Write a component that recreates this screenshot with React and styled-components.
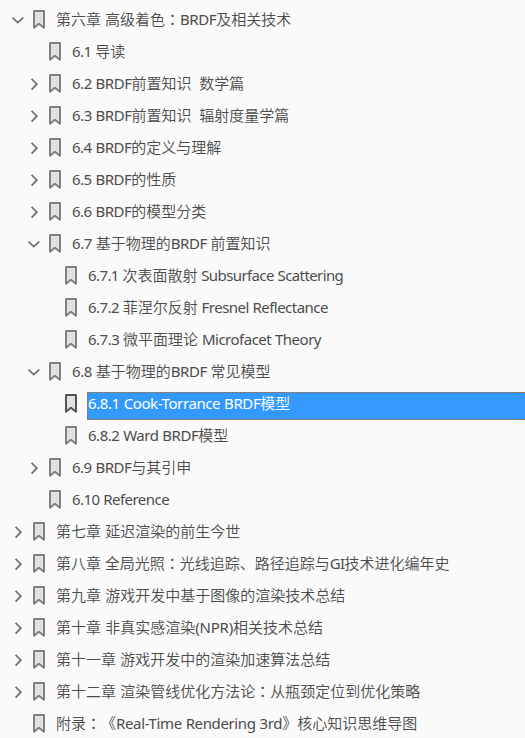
import React from "react";
import styled, { createGlobalStyle } from "styled-components";

const GlobalStyle = createGlobalStyle`
  html, body { margin: 0; background: #fafafa; overflow: hidden; }
`;

const Tree = styled.ul`
  box-sizing: border-box;
  height: 738px;
  margin: 0;
  padding: 4px 0 0;
  overflow: hidden;
  list-style: none;
  background: #fafafa;
  color: #4c4c4c;
  font-family: "Noto Sans", "Noto Sans CJK SC", sans-serif;
  font-size: 15px;
  text-spacing-trim: space-all;
`;

const Row = styled.li`
  display: flex;
  align-items: stretch;
  height: 32px;
  padding-left: ${(p) => 10 + p.$level * 16}px;
`;

const Toggle = styled.span`
  flex: none;
  width: 16px;
  height: 32px;
  svg { display: block; }
`;

const Mark = styled.span`
  flex: none;
  width: 29px;
  height: 32px;
  color: ${(p) => (p.$active ? "#555" : "#808080")};
  svg { display: block; }
`;

const Label = styled.span`
  box-sizing: border-box;
  flex: 1;
  height: 28px;
  margin-top: 4px;
  border: 1px dotted transparent;
  border-right: 0;
  line-height: 20px;
  white-space: pre;
  ${(p) =>
    p.$active &&
    `
    color: #fff;
    background: #3399ff;
    border-color: #cc6600;
  `}
`;

const Latin = styled.span`
  letter-spacing: ${(p) => p.$tracking}px;
  word-spacing: 0.4px;
`;

const Han = styled.span`
  font-family: "Noto Sans CJK SC", sans-serif;
  font-weight: 350;
`;

const Colon = styled.span`
  font-family: "Noto Sans CJK TC", sans-serif;
`;

function Chevron({ open }) {
  return (
    <svg width="16" height="32" viewBox="0 0 16 32" fill="none" stroke="#6e6e6e" strokeWidth="1.7">
      <path d={open ? "M2.4 13.7L7.8 18.7L13.2 13.7" : "M5.6 10.8L10.8 16.2L5.6 21.6"} />
    </svg>
  );
}

function Bookmark() {
  return (
    <svg width="20" height="32" viewBox="0 0 20 32">
      <path
        d="M8 7H18V23.8L13 19.8L8 23.8Z"
        fill="#e1e1e1"
        stroke="currentColor"
        strokeWidth="2"
        strokeLinejoin="round"
      />
    </svg>
  );
}

function MixedText({ text, tracking }) {
  return text.match(/[\x00-\x7f]+|：|[^\x00-\x7f：]+/g).map((run, i) => {
    if (run === "：") return <Colon key={i}>{run}</Colon>;
    if (run.charCodeAt(0) < 128) return <Latin key={i} $tracking={tracking}>{run}</Latin>;
    return <Han key={i}>{run}</Han>;
  });
}

const items = [
  [0, "open", "第六章 高级着色：BRDF及相关技术", -0.4],
  [1, "", "6.1 导读", -0.55],
  [1, "closed", "6.2 BRDF前置知识  数学篇", -0.48],
  [1, "closed", "6.3 BRDF前置知识  辐射度量学篇", -0.48],
  [1, "closed", "6.4 BRDF的定义与理解", -0.5],
  [1, "closed", "6.5 BRDF的性质", -0.5],
  [1, "closed", "6.6 BRDF的模型分类", -0.5],
  [1, "open", "6.7 基于物理的BRDF 前置知识", -0.45],
  [2, "", "6.7.1 次表面散射 Subsurface Scattering", -0.6],
  [2, "", "6.7.2 菲涅尔反射 Fresnel Reflectance", -0.54],
  [2, "", "6.7.3 微平面理论 Microfacet Theory", -0.5],
  [1, "open", "6.8 基于物理的BRDF 常见模型", -0.45],
  [2, "", "6.8.1 Cook-Torrance BRDF模型", -0.4, true],
  [2, "", "6.8.2 Ward BRDF模型", -0.48],
  [1, "closed", "6.9 BRDF与其引申", -0.5],
  [1, "", "6.10 Reference", -0.55],
  [0, "closed", "第七章 延迟渲染的前生今世", 0],
  [0, "closed", "第八章 全局光照：光线追踪、路径追踪与GI技术进化编年史", -0.6],
  [0, "closed", "第九章 游戏开发中基于图像的渲染技术总结", 0],
  [0, "closed", "第十章 非真实感渲染(NPR)相关技术总结", -0.2],
  [0, "closed", "第十一章 游戏开发中的渲染加速算法总结", 0],
  [0, "closed", "第十二章 渲染管线优化方法论：从瓶颈定位到优化策略", 0],
  [0, "", "附录：《Real-Time Rendering 3rd》核心知识思维导图", -0.37],
];

export default function App() {
  return (
    <>
      <GlobalStyle />
      <Tree>
        {items.map(([level, state, text, tracking, active]) => (
          <Row key={text} $level={level}>
            <Toggle>{state && <Chevron open={state === "open"} />}</Toggle>
            <Mark $active={active}>
              <Bookmark />
            </Mark>
            <Label $active={active}>
              <MixedText text={text} tracking={tracking} />
            </Label>
          </Row>
        ))}
      </Tree>
    </>
  );
}
